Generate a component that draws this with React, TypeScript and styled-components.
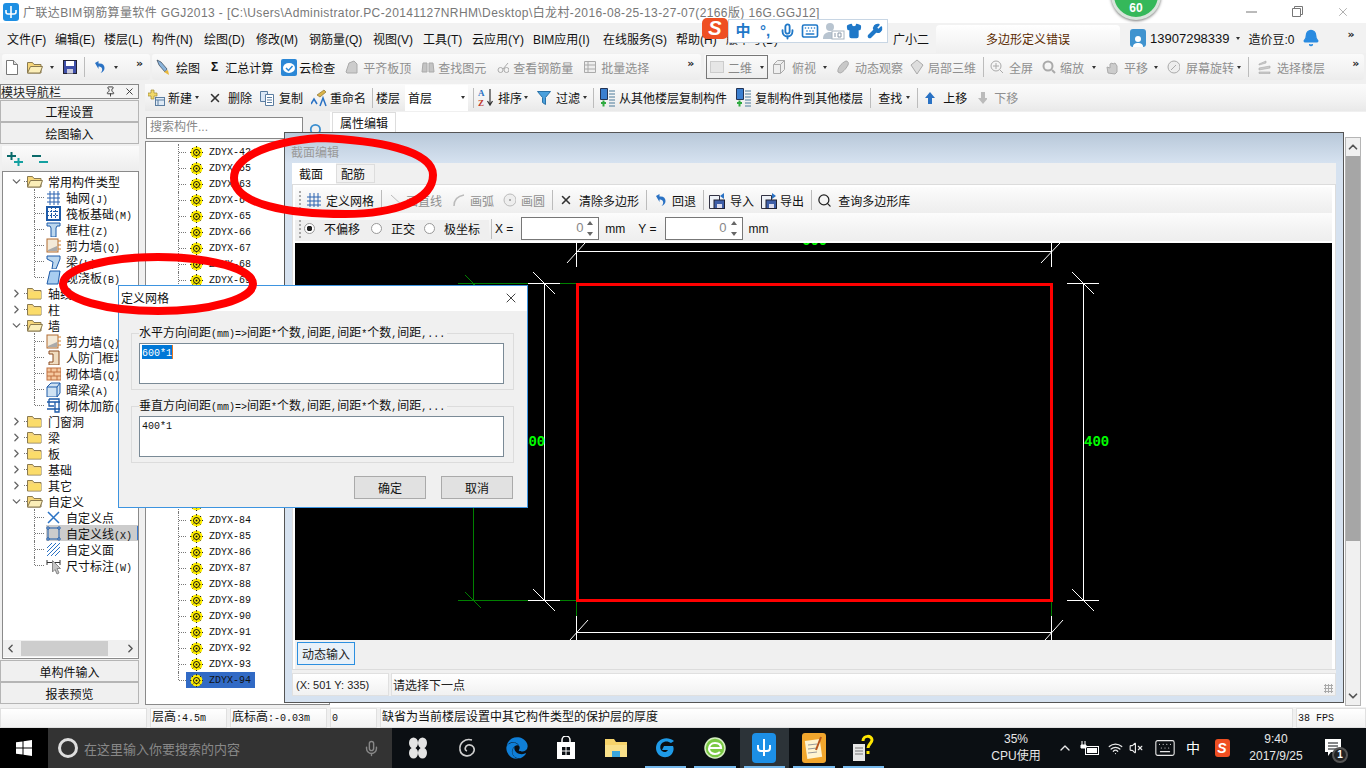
import React from 'react';
import styled, { createGlobalStyle } from 'styled-components';
import { Bell, ChevronDown, ChevronLeft, ChevronRight, ChevronUp, Keyboard, Mic, Pin, Search, Shirt, VolumeX, Wifi, Wrench, X } from 'lucide-react';
import { FaEdge } from 'react-icons/fa';

const GlobalStyle = createGlobalStyle`
  html, body { margin: 0; padding: 0; background: #f0f0f0; }
  * { box-sizing: border-box; }
  body { font: 12px "Liberation Sans", "Noto Sans CJK SC", sans-serif; color: #111; }
`;

const Root = styled.div`
  position: relative;
  width: 1366px;
  height: 768px;
  overflow: hidden;
  display: flex;
  flex-direction: column;
  background: #f0f0f0;
`;

/* ---- title + menu ---- */
const TitleBar = styled.div`
  height: 23px;
  background: #fff;
  display: flex;
  align-items: center;
  padding-left: 3px;
  color: #777;
  font-size: 12px;
  white-space: nowrap;
`;
const TitleText = styled.span`
  margin-left: 4px;
  letter-spacing: 0.4px;
`;
const WinBtns = styled.div`
  margin-left: auto;
  display: flex;
  color: #777;
`;
const WinBtn = styled.div`
  width: 46px;
  height: 20px;
  display: flex;
  align-items: center;
  justify-content: center;
`;
const MenuBar = styled.div`
  height: 30px;
  display: flex;
  align-items: center;
  padding-left: 7px;
  background: #f2f2f2;
  white-space: nowrap;
`;
const MenuItem = styled.span<{ $w: number }>`
  width: ${p => p.$w}px;
  flex: none;
`;
const MsgTab = styled.div`
  width: 184px;
  height: 28px;
  margin: 1px 0 0 0;
  border-radius: 4px 4px 0 0;
  background: linear-gradient(#fff, #efefef);
  color: #5b2b00;
  display: flex;
  align-items: center;
  justify-content: center;
  flex: none;
`;
const UserBox = styled.div`
  display: flex;
  align-items: center;
  padding-left: 10px;
  flex: 1;
  min-width: 0;
`;
const Avatar = styled.div`
  width: 16px;
  height: 18px;
  border-radius: 3px;
  background: #3f93cf;
  display: flex;
  align-items: flex-end;
  justify-content: center;
  margin-right: 4px;
`;

/* ---- shared toolbar parts ---- */
const ToolRow = styled.div`
  height: 31px;
  display: flex;
  align-items: flex-start;
  padding: 1px 0 0 2px;
  background: #f0f0f0;
`;
const ToolGroup = styled.div<{ $w: number; $ml?: number }>`
  width: ${p => p.$w}px;
  margin-left: ${p => p.$ml ?? 0}px;
  height: 26px;
  display: flex;
  align-items: center;
  background: linear-gradient(#fbfbfb, #f3f3f3 60%, #ececec);
  border-radius: 3px;
  flex: none;
  white-space: nowrap;
`;
const Tool = styled.span<{ $ml?: number; $gap?: number; $off?: boolean }>`
  display: inline-flex;
  align-items: center;
  flex: none;
  margin-left: ${p => p.$ml ?? 0}px;
  gap: ${p => p.$gap ?? 5}px;
  color: ${p => (p.$off ? '#8f8f8f' : '#111')};
  svg { flex: none; display: block; }
`;
const Caret = styled.i<{ $ml?: number }>`
  flex: none;
  margin-left: ${p => p.$ml ?? 0}px;
  width: 0;
  height: 0;
  border-left: 2.5px solid transparent;
  border-right: 2.5px solid transparent;
  border-top: 3px solid #333;
`;
const Sep = styled.i<{ $ml?: number }>`
  flex: none;
  margin-left: ${p => p.$ml ?? 0}px;
  width: 1px;
  height: 20px;
  background: #bcbcbc;
`;
const More = styled.b<{ $ml?: number }>`
  flex: none;
  margin-left: ${p => p.$ml ?? 0}px;
  margin-top: -8px;
  font: bold 11px "DejaVu Sans", sans-serif;
  color: #222;
`;
const Combo = styled.div<{ $ml: number; $w: number; $line?: boolean }>`
  flex: none;
  margin-left: ${p => p.$ml}px;
  width: ${p => p.$w}px;
  height: ${p => (p.$line ? 24 : 26)}px;
  display: flex;
  align-items: center;
  padding: 0 3px;
  background: ${p => (p.$line ? 'transparent' : '#fff')};
  border: ${p => (p.$line ? '1px solid #777' : '0')};
`;
const ComboText = styled.span<{ $off?: boolean }>`
  flex: 1;
  color: ${p => (p.$off ? '#888' : '#111')};
`;
const Swatch = styled.i`
  width: 14px;
  height: 12px;
  margin-right: 4px;
  border: 1px solid #ccc;
  background: #e6e6e6;
`;
const BeanText = styled.span`
  margin-left: 9px;
`;
const Num = styled.span`
  font-size: 13px;
`;

/* ---- work area ---- */
const Work = styled.div`
  flex: 1;
  display: flex;
  min-height: 0;
`;
const Nav = styled.div`
  width: 139px;
  flex: none;
  display: flex;
  flex-direction: column;
`;
const NavHead = styled.div`
  height: 15px;
  border: 1px solid #888;
  display: flex;
  align-items: center;
  justify-content: space-between;
  padding: 0 3px 0 0;
  background: #f4f4f4;
  color: #222;
  svg { display: block; }
`;
const NavHeadIcons = styled.span`
  display: flex;
  gap: 8px;
`;
const NavBtn = styled.div<{ $top?: number }>`
  height: 22px;
  margin-top: ${p => p.$top ?? 0}px;
  flex: none;
  display: flex;
  align-items: center;
  justify-content: center;
  border: 1px solid #b5b5b5;
  background: #f0f0f0;
  color: #111;
`;
const TreeTools = styled.div`
  height: 25px;
  margin: 2px 0 0 2px;
  display: flex;
  align-items: center;
  gap: 9px;
  padding-left: 5px;
  background: linear-gradient(#fbfbfb, #ededed);
`;
const TreeBox = styled.div`
  position: relative;
  height: 488px;
  margin-left: 2px;
  border: 1px solid #8a8a8a;
  background: #fff;
  padding-top: 1px;
  display: flex;
  flex-direction: column;
`;
const TreeScroll = styled.div`
  flex: 1;
  overflow: hidden;
`;
const HBar = styled.div`
  height: 17px;
  display: flex;
  align-items: center;
  justify-content: space-between;
  padding: 0 1px;
  background: #f0f0f0;
  color: #555;
  margin-bottom: 1px;
`;
const HThumb = styled.i`
  position: absolute;
  left: 18px;
  bottom: 2px;
  width: 87px;
  height: 15px;
  background: #cdcdcd;
`;
const Row = styled.div<{ $child?: boolean; $last?: boolean }>`
  position: relative;
  height: 16px;
  display: flex;
  align-items: center;
  white-space: nowrap;
  padding-left: ${p => (p.$child ? 43 : 5)}px;
  ${p => p.$child && `
    &::before {
      content: '';
      position: absolute;
      left: 31px;
      top: 0;
      height: ${p.$last ? 8 : 16}px;
      border-left: 1px dotted #777;
    }
    &::after {
      content: '';
      position: absolute;
      left: 32px;
      top: 8px;
      width: 9px;
      border-top: 1px dotted #777;
    }
  `}
`;
const Expander = styled.span`
  width: 16px;
  display: flex;
  justify-content: center;
  color: #666;
  flex: none;
`;
const Stub = styled.i`
  width: 3px;
  border-top: 1px dotted #777;
  flex: none;
`;
const NodeLabel = styled.span<{ $sel?: boolean }>`
  display: flex;
  align-items: center;
  gap: 5px;
  height: 16px;
  width: ${p => (p.$sel ? '93px' : 'auto')};
  background: ${p => (p.$sel ? '#cccccc' : 'transparent')};
  svg { flex: none; display: block; }
`;
const EditStub = styled.i`
  margin-left: auto;
  width: 3px;
  height: 14px;
  background: #fff;
  border: 1px solid #3a7ad0;
  border-right: 0;
`;
const Latin = styled.span`
  font: 10px "Liberation Mono", monospace;
`;
const Right = styled.div`
  flex: 1;
  margin-left: 6px;
  display: flex;
  flex-direction: column;
  min-width: 0;
`;
const Toolbar2 = styled.div`
  height: 27px;
  flex: none;
  display: flex;
  align-items: center;
  white-space: nowrap;
  background: linear-gradient(#fbfbfb, #f2f2f2 60%, #e9e9e9);
`;
const Body = styled.div`
  position: relative;
  flex: 1;
  display: flex;
  padding-top: 1px;
  min-height: 0;
`;
const ListCol = styled.div`
  width: 185px;
  flex: none;
  display: flex;
  flex-direction: column;
`;
const SearchRow = styled.div`
  height: 29px;
  display: flex;
  padding: 5px 0 0 1px;
  gap: 6px;
  color: #3a8ecf;
  svg { margin-top: 6px; }
`;
const SearchInput = styled.div`
  width: 157px;
  height: 22px;
  border: 1px solid #888;
  background: #fff;
  color: #888;
  padding: 0 3px;
  line-height: 18px;
`;
const ListPanel = styled.div`
  flex: 1;
  border: 1px solid #8a8a8a;
  background: #fff;
  margin-bottom: 2px;
  padding-top: 2px;
  overflow: hidden;
`;
const ListRow = styled.div<{ $last?: boolean }>`
  position: relative;
  height: 16px;
  display: flex;
  padding-left: 40px;
  &::before {
    content: '';
    position: absolute;
    left: 32px;
    top: 0;
    height: ${p => (p.$last ? 8 : 16)}px;
    border-left: 1px dotted #777;
  }
  &::after {
    content: '';
    position: absolute;
    left: 33px;
    top: 8px;
    width: 7px;
    border-top: 1px dotted #777;
  }
`;
const ListItem = styled.span<{ $sel?: boolean }>`
  display: flex;
  align-items: center;
  gap: 6px;
  padding: 0 4px;
  background: ${p => (p.$sel ? '#316ac5' : 'transparent')};
  font: 10px "Liberation Mono", monospace;
  color: #111;
`;
const PropCol = styled.div`
  flex: 1;
  display: flex;
  flex-direction: column;
`;
const PropTabs = styled.div`
  height: 20px;
  padding-left: 2px;
  display: flex;
  background: #fff;
`;
const PropTab = styled.div`
  width: 64px;
  display: flex;
  align-items: center;
  justify-content: center;
  background: #fff;
  border: 1px solid #ddd;
  border-bottom: 0;
`;
const PropBlank = styled.div`
  flex: 1;
  background: #fff;
`;
const VBar = styled.div`
  position: absolute;
  left: 1200px;
  top: 26px;
  width: 16px;
  height: 569px;
  border: 1px solid #b5b5b5;
  display: flex;
  flex-direction: column;
  align-items: center;
  color: #555;
  background: #f0f0f0;
  svg { flex: none; margin: 2px 0; }
`;
const VThumb = styled.i`
  width: 100%;
  height: 385px;
  margin: 0 0 auto;
  background: #a6a6a6;
`;

/* ---- editor window ---- */
const EditorWindow = styled.div`
  position: absolute;
  left: 139px;
  top: 21px;
  width: 1060px;
  height: 571px;
  border: 1px solid #555;
  background: #d6e2f0;
  display: flex;
  flex-direction: column;
`;
const EditorTitle = styled.div`
  height: 30px;
  flex: none;
  padding: 10px 0 0 6px;
  color: #999;
  background: linear-gradient(#b8c8d9, #d6e2f0);
`;
const EditorBody = styled.div`
  margin: 0 7px;
  height: 533px;
  background: #f0f0f0;
  display: flex;
  flex-direction: column;
`;
const TabRow = styled.div`
  height: 21px;
  flex: none;
  display: flex;
  align-items: flex-end;
`;
const SecTab = styled.div<{ $on?: boolean }>`
  width: ${p => (p.$on ? 44 : 39)}px;
  height: ${p => (p.$on ? 21 : 19)}px;
  display: flex;
  align-items: center;
  padding-left: ${p => (p.$on ? 7 : 4)}px;
  padding-bottom: 1px;
  background: ${p => (p.$on ? '#fff' : '#f2f2f2')};
  border: ${p => (p.$on ? '0' : '1px solid #ddd')};
  margin-bottom: ${p => (p.$on ? 0 : 1)}px;
`;
const SecPanel = styled.div`
  height: 486px;
  flex: none;
  border: 1px solid #dcdcdc;
  background: #fff;
  padding: 2px 3px 0 2px;
  display: flex;
  flex-direction: column;
`;
const EditBar = styled.div<{ $h: number; $top?: number }>`
  height: ${p => p.$h}px;
  padding-top: ${p => p.$top ?? 0}px;
  flex: none;
  display: flex;
  align-items: center;
  white-space: nowrap;
  background: linear-gradient(#fcfcfc, #f3f3f3 60%, #eeeeee);
`;
const Grip = styled.i`
  flex: none;
  width: 2px;
  height: 18px;
  margin-left: 4px;
  border-left: 2px dotted #aaa;
`;
const ModeGroup = styled.div`
  width: 194px;
  height: 18px;
  display: flex;
  align-items: center;
  background: #efefef;
  flex: none;
`;
const Radio = styled.i<{ $on?: boolean; $ml: number }>`
  flex: none;
  margin-left: ${p => p.$ml}px;
  width: 11px;
  height: 11px;
  border: 1px solid #999;
  border-radius: 50%;
  background: ${p => (p.$on ? 'radial-gradient(circle, #222 0 2.6px, #fff 3px)' : '#fff')};
`;
const ModeLabel = styled.span<{ $ml: number }>`
  margin-left: ${p => p.$ml}px;
`;
const Field = styled.div<{ $ml: number }>`
  position: relative;
  flex: none;
  margin-left: ${p => p.$ml}px;
  width: 78px;
  height: 23px;
  border: 1px solid #777;
  background: #fff;
  text-align: right;
  line-height: 20px;
  padding-right: 15px;
  color: #888;
  font-size: 13px;
`;
const Spin = styled.i<{ $down?: boolean }>`
  position: absolute;
  right: 5px;
  ${p => (p.$down ? 'bottom: 3px;' : 'top: 3px;')}
  border-left: 3px solid transparent;
  border-right: 3px solid transparent;
  ${p => (p.$down ? 'border-top: 4px solid #666;' : 'border-bottom: 4px solid #666;')}
`;
const Canvas = styled.div`
  height: 397px;
  margin-top: 2px;
  flex: none;
  background: #000;
  svg { display: block; }
`;
const CanvasFoot = styled.div`
  flex: 1;
  background: #f0f0f0;
  padding: 2px 0 0 2px;
`;
const DynBtn = styled.div`
  width: 58px;
  height: 23px;
  border: 1px solid #2b8fe0;
  background: #e8f1f9;
  color: #222;
  display: flex;
  align-items: center;
  justify-content: center;
`;
const PromptRow = styled.div`
  height: 23px;
  margin-top: 3px;
  flex: none;
  display: flex;
  gap: 2px;
`;
const PromptCell = styled.div<{ $w?: number }>`
  position: relative;
  ${p => (p.$w ? `width: ${p.$w}px; font-size: 11px;` : 'flex: 1;')}
  border: 1px solid #e0e0e0;
  background: linear-gradient(#fff, #f1f1f1);
  display: flex;
  align-items: center;
  padding-left: ${p => (p.$w ? 3 : 1)}px;
  color: #222;
`;
const ResizeGrip = styled.i`
  position: absolute;
  right: 2px;
  bottom: 2px;
  width: 9px;
  height: 9px;
  background: radial-gradient(circle, #aaa 1px, transparent 1.2px) 0 0 / 3px 3px;
`;

/* ---- status + taskbar ---- */
const StatusBar = styled.div`
  height: 20px;
  margin-top: 1px;
  flex: none;
  display: flex;
  gap: 3px;
`;
const StatusCell = styled.div<{ $w?: number }>`
  ${p => (p.$w ? `width: ${p.$w}px; flex: none;` : 'flex: 1;')}
  border: 1px solid #e0e0e0;
  background: linear-gradient(#fff, #f2f2f2);
  padding-left: 1px;
  line-height: 17px;
  white-space: nowrap;
`;
const Taskbar = styled.div`
  height: 40px;
  flex: none;
  display: flex;
  background: #0b0f13;
  color: #eee;
`;
const StartBtn = styled.div`
  width: 48px;
  background: #000;
  display: flex;
  align-items: center;
  justify-content: center;
`;
const SearchBox = styled.div`
  width: 344px;
  margin-right: 1px;
  background: #333;
  color: #888;
  display: flex;
  align-items: center;
  padding-left: 10px;
  font-size: 13px;
`;
const Cortana = styled.i`
  width: 20px;
  height: 20px;
  margin-right: 6px;
  border: 3px solid #ddd;
  border-radius: 50%;
`;
const SearchMic = styled.span`
  margin-left: auto;
  margin-right: 12px;
  display: flex;
`;
const Slot = styled.div<{ $run?: boolean; $on?: boolean }>`
  position: relative;
  width: 49.5px;
  flex: none;
  display: flex;
  align-items: center;
  justify-content: center;
  background: ${p => (p.$on ? '#2c3338' : 'transparent')};
  ${p => p.$run && `
    &::after {
      content: '';
      position: absolute;
      left: 4px;
      right: 4px;
      bottom: 0;
      height: 2px;
      background: #76b9ed;
    }
  `}
`;
const Tray = styled.div`
  margin-left: auto;
  display: flex;
  padding-right: 8px;
`;
const TrayItem = styled.div<{ $w: number }>`
  position: relative;
  width: ${p => p.$w}px;
  flex: none;
  display: flex;
  flex-direction: column;
  align-items: center;
  justify-content: center;
  line-height: 17px;
  font-size: 12px;
  color: #e8e8e8;
`;
const CnTray = styled.span`
  font-size: 14px;
  color: #fff;
`;
const NoteBadge = styled.b`
  position: absolute;
  left: 24px;
  top: 19px;
  width: 16px;
  height: 16px;
  border-radius: 50%;
  border: 2px solid #555;
  background: #222;
  color: #fff;
  font: bold 10px/12px "Liberation Sans", sans-serif;
  text-align: center;
`;

/* ---- things lying on top ---- */
const ScoreBadge = styled.div`
  position: absolute;
  left: 1111px;
  top: -30px;
  width: 50px;
  height: 50px;
  border-radius: 50%;
  background: #35b85a;
  border: 3px solid #d9e4dc;
  box-shadow: 0 1px 3px #777;
  color: #fff;
  font: bold 12px "Liberation Sans", sans-serif;
  display: flex;
  align-items: flex-end;
  justify-content: center;
  padding-bottom: 2px;
`;
const ImeBar = styled.div`
  position: absolute;
  left: 702px;
  top: 18px;
  display: flex;
  align-items: flex-start;
`;
const ImeLogo = styled.div`
  width: 26px;
  height: 21px;
  border-radius: 5px;
  background: #ef4f22;
  color: #fff;
  font: italic bold 20px/21px "Liberation Sans", sans-serif;
  text-align: center;
`;
const TrayLogo = styled(ImeLogo)`
  width: 15px;
  height: 18px;
  border-radius: 3px;
  font-size: 14px;
  line-height: 18px;
`;
const ImeBody = styled.div`
  width: 160px;
  height: 24px;
  margin-top: 1px;
  background: #fff;
  border: 1px solid #c8d6e4;
  color: #1f78c8;
  display: flex;
  align-items: center;
  padding-left: 4px;
`;
const ImeCell = styled.span<{ $w: number; $bold?: boolean }>`
  width: ${p => p.$w}px;
  flex: none;
  display: flex;
  justify-content: center;
  font-weight: ${p => (p.$bold ? 700 : 400)};
  font-size: 15px;
  line-height: 18px;
`;
const Dialog = styled.div`
  position: absolute;
  left: 118px;
  top: 285px;
  width: 410px;
  height: 223px;
  border: 1px solid #3d94e0;
  background: #f0f0f0;
  display: flex;
  flex-direction: column;
`;
const DialogTitle = styled.div`
  height: 25px;
  flex: none;
  background: #fff;
  display: flex;
  align-items: center;
  justify-content: space-between;
  padding: 0 8px 2px 2px;
  color: #111;
`;
const DialogBody = styled.div`
  flex: 1;
  padding: 22px 13px 0 12px;
  display: flex;
  flex-direction: column;
  gap: 16px;
`;
const FieldSet = styled.div`
  position: relative;
  height: 57px;
  border: 1px solid #dcdcdc;
  padding: 9px 9px 0 7px;
`;
const FieldLegend = styled.span`
  position: absolute;
  left: 7px;
  top: -8px;
  padding-right: 2px;
  height: 14px;
  line-height: 14px;
  background: #f0f0f0;
  white-space: nowrap;
  color: #111;
`;
const TextArea = styled.div`
  height: 41px;
  border: 1px solid #7a8a96;
  background: #fff;
  padding: 1px 2px;
  line-height: 14px;
  color: #111;
`;
const Selected = styled.span`
  display: inline-block;
  background: #0078d7;
  color: #fff;
  border-right: 1px solid #e87722;
`;
const DialogFoot = styled.div`
  display: flex;
  justify-content: flex-end;
  gap: 15px;
  margin-top: -3px;
  padding-right: 1px;
`;
const DialogBtn = styled.div`
  width: 72px;
  height: 23px;
  border: 1px solid #aaa;
  background: #e1e1e1;
  display: flex;
  align-items: center;
  justify-content: center;
`;
const Marks = styled.svg`
  position: absolute;
  left: 0;
  top: 0;
  pointer-events: none;
`;

/* ---- small drawings ---- */
const sim = (s: string) => (
  <span>
    {s.split(/([\x20-\x7e]+)/).map((part, i) => (/^[\x20-\x7e]+$/.test(part) ? <Latin key={i}>{part}</Latin> : part))}
  </span>
);

const Ico = ({ w = 16, h = 16, children }: { w?: number; h?: number; children: React.ReactNode }) => (
  <svg width={w} height={h} viewBox={`0 0 ${w} ${h}`}>{children}</svg>
);
const AppLogo = () => (
  <Ico w={16} h={18}>
    <rect width="16" height="18" rx="3" fill="#1d8fe3" />
    <path d="M8 3v12M3 7v2a2 2 0 0 0 2 2h6a2 2 0 0 0 2-2V7" stroke="#fff" strokeWidth="1.6" fill="none" />
  </Ico>
);
const DocIcon = () => (
  <Ico w={12} h={16}>
    <path d="M.5 1.500h7l4 4v10H.5z" fill="#fff" stroke="#777" />
    <path d="M7.500 1.500v4h4" fill="#ddd" stroke="#777" />
  </Ico>
);
const FolderIcon = ({ open, w = 16 }: { open?: boolean; w?: number }) => (
  <Ico w={w} h={14}>
    <path d="M.5 2.500h5l1.500 2h7v8.500h-13.500z" fill="#f6d67a" stroke="#8a7a50" />
    {open ? (
      <path d="M.5 13l3-6.500h12l-2.500 6.500z" fill="#fbeeb8" stroke="#8a7a50" />
    ) : (
      <path d="M1.500 6h12.500v6.500h-12.500z" fill="#fbdc6a" />
    )}
  </Ico>
);
const SaveIcon = () => (
  <Ico w={14} h={16}>
    <rect x=".5" y="1.500" width="13" height="13" fill="#3f4fa8" stroke="#223" />
    <rect x="3" y="2" width="8" height="5" fill="#fff" />
    <rect x="4" y="10" width="6" height="4.500" fill="#ccd" />
  </Ico>
);
const UndoIcon = ({ w = 12 }: { w?: number }) => (
  <Ico w={w} h={14}>
    <path d="M2 3l3.500-2v2.500c4-.5 6 1.500 6 4.500 0 2.500-1.500 4-4 5 1.500-1.500 2-3 1.500-4.500-.5-1.500-2-2-3.500-2v2.500z" fill="#2a72c4" />
  </Ico>
);
const DrawIcon = () => (
  <Ico w={14} h={18}>
    <path d="M1 2l4 2 6 7-2 3-6-7z" fill="#8ab4dc" stroke="#345" strokeWidth=".7" />
    <path d="M8 14l5 3-1-5z" fill="#e9b83a" />
  </Ico>
);
const CloudCheck = () => (
  <Ico w={16} h={17}>
    <rect width="16" height="17" rx="2" fill="#2b87d6" />
    <ellipse cx="8" cy="9" rx="6" ry="5" fill="#fff" />
    <path d="M5 9l2.500 2.500 4-4.500" stroke="#2b87d6" strokeWidth="1.500" fill="none" />
  </Ico>
);
const GrayShape = ({ w = 14, kind }: { w?: number; kind: string }) => (
  <Ico w={w} h={16}>
    {kind === 'flat' && <path d="M1 13l3-9 5-2 3 3v9H2z" fill="#ccc" stroke="#aaa" />}
    {kind === 'binoc' && <path d="M2 4h4v9H1zM8 4h4l1 9H8z" fill="#c4c4c4" stroke="#aaa" />}
    {kind === 'glasses' && <path d="M1 11a2.500 2.500 0 1 0 5 0 2.500 2.500 0 1 0-5 0zM7 11a2.500 2.500 0 1 0 5 0 2.500 2.500 0 1 0-5 0zM6 10l5-6" fill="none" stroke="#aaa" />}
    {kind === 'batch' && <path d="M1.500 2.500h11v11h-11zM1.500 6h11M1.500 10h11M5 2.500v11" fill="#eee" stroke="#aaa" />}
    {kind === 'box' && <path d="M1.500 5.500l4-4h7v9l-4 4h-7zM1.500 5.500h7v9M8.500 5.500l4-4" fill="#eee" stroke="#aaa" />}
    {kind === 'orbit' && <path d="M2 13c-1-3 3-9 8-11 2 0 3 2 2 4-2 4-6 8-8 8z" fill="#c8c8c8" stroke="#aaa" />}
    {kind === 'local' && <path d="M7 1l6 5-6 9-6-9z" fill="#ddd" stroke="#aaa" />}
    {kind === 'full' && <g fill="none" stroke="#aaa"><circle cx="6" cy="7" r="5" /><path d="M6 4v6M3 7h6M10 11l3 3" /></g>}
    {kind === 'zoom' && <g fill="none" stroke="#aaa"><circle cx="6" cy="7" r="4.500" strokeWidth="2" /><path d="M10 11l3 3" strokeWidth="2" /></g>}
    {kind === 'pan' && <path d="M3 14l-1-6 3 1V5l2-1 1 1 2-1 2 3v6l-2 2z" fill="#ccc" stroke="#aaa" />}
    {kind === 'rotate' && <g fill="#eee" stroke="#aaa"><circle cx="7" cy="8" r="6" /><path d="M4 11l5-5" /></g>}
    {kind === 'floors' && <path d="M2 5l7-3v2l-7 2zM2 9l11-2v2l-11 2zM2 13h11v1.500h-11z" fill="#ccc" stroke="#aaa" strokeWidth=".6" />}
    {kind === 'line' && <path d="M1 3l12 11" stroke="#bbb" />}
    {kind === 'arc' && <path d="M2 14c0-6 4-10 10-11" stroke="#bbb" strokeWidth="1.500" fill="none" />}
    {kind === 'circle' && <g><circle cx="7" cy="8" r="6" fill="#eee" stroke="#bbb" /><circle cx="7" cy="8" r="1" fill="#999" /></g>}
    {kind === 'down' && <path d="M4 2h4v6h3l-5 6-5-6h3z" fill="#bbb" />}
  </Ico>
);
const NewIcon = () => (
  <Ico w={17} h={17}>
    <path d="M3 1h3v3h3v3H6v3H3V7H0V4h3z" fill="#f0d86a" stroke="#a08a30" strokeWidth=".7" />
    <rect x="7.500" y="8.500" width="9" height="8" fill="#dfeaf5" stroke="#5b7da0" />
    <path d="M7.500 11h9M10 11v5" stroke="#5b7da0" />
  </Ico>
);
const CopyIcon = () => (
  <Ico w={14} h={16}>
    <path d="M.5 1.500h7v10h-7z" fill="#dce8f6" stroke="#5b7da0" />
    <path d="M5.500 4.500h8v11h-8z" fill="#fff" stroke="#5b7da0" />
    <path d="M7 7.500h5M7 10h5M7 12.500h5" stroke="#5b7da0" />
  </Ico>
);
const RenameIcon = () => (
  <Ico w={16} h={18}>
    <path d="M6 6l7-5 2 2-6 5z" fill="#d9b44a" stroke="#8a7030" strokeWidth=".7" />
    <path d="M0 15l3-5 3 5M9 17l3-8 3 8" fill="none" stroke="#2a72c4" strokeWidth="1.500" />
  </Ico>
);
const SortIcon = () => (
  <Ico w={16} h={19}>
    <text x="0" y="8" fontSize="9" fontFamily="Liberation Serif" fontWeight="700" fill="#2a72c4">A</text>
    <text x="0" y="18" fontSize="9" fontFamily="Liberation Serif" fontWeight="700" fill="#c0392b">Z</text>
    <path d="M12 1v15M9.500 13l2.500 4 2.500-4" stroke="#333" strokeWidth="1.200" fill="none" />
  </Ico>
);
const FilterIcon = () => (
  <Ico w={14} h={16}>
    <path d="M.5 1.500h13l-5 6v7l-3-2v-5z" fill="#4ba0dc" stroke="#2a72a8" />
  </Ico>
);
const FloorCopy = () => (
  <Ico w={15} h={19}>
    <path d="M.5.5h7v11h-7z" fill="#3a7fd0" stroke="#235" />
    <path d="M9 3h6M9 6h6M9 9h6M9 12h6M9 15h6M9 18h6" stroke="#4a7a9a" />
    <path d="M1 15h5M3.500 12.500v6" stroke="#2eaa3f" strokeWidth="2" />
  </Ico>
);
const UpArrow = () => (
  <Ico w={10} h={14}>
    <path d="M5 1l5 6H7v6H3V7H0z" fill="#2a72c4" />
  </Ico>
);
const GridIcon = () => (
  <Ico w={14} h={16}>
    <path d="M3 1v14M7 1v14M11 1v14M0 5h14M0 9h14M0 13h14" stroke="#2a62b0" />
  </Ico>
);
const XIcon = () => <X size={14} strokeWidth={2.6} color="#333" />;
const DiskIcon = ({ flip }: { flip?: boolean }) => (
  <Ico w={16} h={17}>
    <path d="M.5 3.500h10v13h-10z" fill="#eef2f8" stroke="#334" />
    <rect x="5" y="8" width="10.500" height="8.500" fill="#3f5fa8" stroke="#223" />
    <rect x="8" y="12" width="5" height="4" fill="#dde" />
    <path d={flip ? 'M11 1l4 3-4 3z' : 'M15 1l-4 3 4 3z'} fill="#2a72c4" />
  </Ico>
);
const PlusMinus = ({ minus }: { minus?: boolean }) => (
  <Ico w={16} h={16}>
    <path d="M0 5h9" stroke="#0a6a6a" strokeWidth="2" />
    {!minus && <path d="M4.500 1v8" stroke="#0a6a6a" strokeWidth="2" />}
    <path d="M7 11h9" stroke="#14a0a0" strokeWidth="2" />
    {!minus && <path d="M11.500 7v8" stroke="#14a0a0" strokeWidth="2" />}
  </Ico>
);
const nodeIcons: Record<string, React.ReactNode> = {
  grid: <path d="M1 4h13M1 8h13M1 12h13M4 1v14M8 1v14M12 1v14" stroke="#2a62b0" />,
  raft: <g><rect x="1" y="1" width="13" height="13" fill="#fff" stroke="#1d5aa8" strokeWidth="2" /><path d="M1 5.500h13M1 9.500h13M5.500 1v13M9.500 1v13" stroke="#1d5aa8" strokeDasharray="2 1" /></g>,
  col: <path d="M1 1h13v3h-3l-1 2v9H5V6L4 4H1z" fill="#bcd7ee" stroke="#1d5aa8" />,
  wall: <g><rect x="1" y="1" width="11" height="13" fill="#f4ead8" stroke="#b06a30" /><path d="M2 12l9-4v5H2z" fill="#aaa" /><path d="M12 3h3M12 7h3M12 11h3" stroke="#d08030" /></g>,
  beam: <path d="M1 2h13v3l-4 10H6l1-7-6-3z" fill="#bcd7ee" stroke="#1d5aa8" />,
  slab: <path d="M4 1h10l-2 13H1z" fill="#a8cdf0" stroke="#1d5aa8" />,
  door: <path d="M3 1h10v14H3v-3h4V4H3z" fill="#f0dcc0" stroke="#8a4a20" />,
  brick: <g><rect x="1" y="2" width="14" height="12" fill="#f6c9a0" stroke="#c07040" /><path d="M1 6h14M1 10h14M5 2v4M11 2v4M8 6v4M5 10v4M11 10v4" stroke="#c07040" /></g>,
  dark: <path d="M1 5l4-4h9v10l-3 4H1zM1 5h10v10M11 5l3-4" fill="#cfe2f3" stroke="#1d5aa8" />,
  rebar: <path d="M1 4h13M1 11h13M3 1h10v13H9V4M3 1v7h5" fill="none" stroke="#1d5aa8" strokeWidth="1.300" />,
  point: <path d="M2 2l11 11M13 2L2 13" stroke="#2a72c4" strokeWidth="1.500" />,
  poly: <g><rect x="2" y="2" width="11" height="11" fill="none" stroke="#1d5aa8" /><path d="M1 1h2v2H1zM12 1h2v2h-2zM1 12h2v2H1zM12 12h2v2h-2z" fill="#fff" stroke="#1d5aa8" /></g>,
  face: <g stroke="#2a72c4"><path d="M1 6l5-5M1 10l9-9M1 14L14 1M5 14l9-9M9 14l5-5" /></g>,
  dim: <path d="M1 2v5M14 2v5M1 4.500h13" stroke="#333" />,
};
const GearIcon = () => (
  <Ico w={13} h={13}>
    <circle cx="6.500" cy="6.500" r="6" fill="#ffee00" />
    <path d="M6.500 0v13M0 6.500h13M2 2l9 9M11 2l-9 9" stroke="#222" strokeWidth="1" strokeDasharray="1.500 1.500" />
    <circle cx="6.500" cy="6.500" r="3" fill="#ffee00" stroke="#111" />
    <circle cx="6.500" cy="6.500" r="1" fill="#111" />
  </Ico>
);
const WinLogo = () => (
  <Ico w={16} h={16}>
    <path d="M0 2.300l6.500-.9V7.500H0zM7.500 1.200L16 0v7.500H7.500zM0 8.500h6.500v6.100L0 13.700zM7.500 8.500H16V16l-8.500-1.200z" fill="#fff" />
  </Ico>
);
const FanIcon = () => (
  <Ico w={22} h={22}>
    <g fill="#e4e4e4">
      <ellipse cx="6.500" cy="6" rx="4.500" ry="5.500" />
      <ellipse cx="15.500" cy="6" rx="4.500" ry="5.500" />
      <ellipse cx="6.500" cy="16" rx="4.500" ry="5.500" />
      <ellipse cx="15.500" cy="16" rx="4.500" ry="5.500" />
    </g>
    <circle cx="11" cy="11" r="1.500" fill="#0b0f13" />
  </Ico>
);
const SwirlIcon = () => (
  <Ico w={20} h={22}>
    <path d="M15 3C8 1 2 6 3 13c1 6 9 8 13 3 3-4 0-9-5-8-3 1-4 5-1 6" fill="none" stroke="#cfcfcf" strokeWidth="1.600" />
  </Ico>
);
const StoreIcon = () => (
  <Ico w={20} h={24}>
    <path d="M6 7V4a4 4 0 0 1 8 0v3" fill="none" stroke="#fff" strokeWidth="1.500" />
    <rect x="1" y="6" width="18" height="17" fill="#fff" />
    <path d="M6 11h3.500v3.500H6zM10.500 11H14v3.500h-3.500zM6 15.500h3.500V19H6zM10.500 15.500H14V19h-3.500z" fill="#0b0f13" />
  </Ico>
);
const ExplorerIcon = () => (
  <Ico w={22} h={20}>
    <path d="M0 1h9l2 3h11v15H0z" fill="#f6d36b" />
    <rect x="0" y="7" width="22" height="12" fill="#f9e08a" />
    <rect x="7" y="13" width="8" height="6" fill="#3aa6dd" />
  </Ico>
);
const GIcon = () => (
  <Ico w={24} h={24}>
    <path d="M21 5C14-1 3 3 3 12c0 8 9 12 15 7 3-3 3-7 2-9h-9l-2 4h6c-1 2-4 3-6 1-3-2-2-8 2-9 3-1 5 0 7 1z" fill="#1f9be8" />
  </Ico>
);
const GreenIe = () => (
  <Ico w={22} h={24}>
    <circle cx="11" cy="12" r="10" fill="#7ac943" stroke="#d5efc0" strokeWidth="1.500" />
    <path d="M5 12h12c0-3-2-5-6-5s-6 3-6 6 3 5 6 5c2 0 4-1 5-2" fill="none" stroke="#fff" strokeWidth="2.200" />
  </Ico>
);
const ActiveApp = () => (
  <Ico w={24} h={30}>
    <rect width="24" height="30" rx="4" fill="#1c8fe6" />
    <path d="M12 6v17M6 12v3a3 3 0 0 0 3 3h6a3 3 0 0 0 3-3v-3" fill="none" stroke="#fff" strokeWidth="2" />
  </Ico>
);
const NoteApp = () => (
  <Ico w={24} h={30}>
    <rect width="24" height="30" rx="3" fill="#f1a62d" />
    <rect x="4" y="7" width="15" height="18" fill="#fff3d0" transform="rotate(-8 11 16)" />
    <path d="M6 12l9-1M6 16l9-1M6 20l9-1" stroke="#999" />
    <path d="M19 4l-5 13" stroke="#b8551c" strokeWidth="2" />
  </Ico>
);
const HelpApp = () => (
  <Ico w={22} h={30}>
    <rect x="1" y="11" width="12" height="17" fill="#e6e6e6" />
    <path d="M3 15h8M3 18h8M3 21h8" stroke="#777" />
    <path d="M11 8c0-6 9-6 9-1 0 3-4 4-4 8M16 18v3" fill="none" stroke="#ffe600" strokeWidth="3" />
  </Ico>
);
const BatteryIcon = () => (
  <Ico w={20} h={16}>
    <path d="M2 1v4M5 1v4M1 5h5v3H1z" stroke="#fff" fill="#fff" />
    <rect x="5.500" y="6.500" width="13" height="8" fill="none" stroke="#fff" />
    <rect x="7" y="8" width="10" height="5" fill="#fff" />
  </Ico>
);
const NoteIcon = () => (
  <Ico w={16} h={18}>
    <path d="M0 0h16v13H6l-3 4v-4H0z" fill="#fff" />
    <path d="M3 4h10M3 7h10M3 10h10" stroke="#0b0f13" />
  </Ico>
);
const ImeUser = () => (
  <Ico w={22} h={18}>
    <circle cx="7" cy="5" r="4" fill="#b8c4d0" />
    <path d="M0 17c0-5 3-7 7-7s7 2 7 7z" fill="#b8c4d0" />
    <rect x="9" y="9" width="12" height="8" fill="#fff" stroke="#a8b4c0" />
    <path d="M12 11v4M15 11h3v4h-3z" stroke="#8a98a8" fill="none" />
  </Ico>
);

/* ---- data ---- */
const menus: [string, number][] = [
  ['文件(F)', 48], ['编辑(E)', 49], ['楼层(L)', 48], ['构件(N)', 52], ['绘图(D)', 52], ['修改(M)', 53],
  ['钢筋量(Q)', 64], ['视图(V)', 50], ['工具(T)', 49], ['云应用(Y)', 61], ['BIM应用(I)', 70], ['在线服务(S)', 73],
  ['帮助(H)', 50], ['版本号(B)', 167], ['广小二', 43],
];

type Node = { label: string; icon?: string; open?: boolean; folder?: boolean; sel?: boolean; last?: boolean };
const tree: Node[] = [
  { label: '常用构件类型', folder: true, open: true },
  { label: '轴网(J)', icon: 'grid' },
  { label: '筏板基础(M)', icon: 'raft' },
  { label: '框柱(Z)', icon: 'col' },
  { label: '剪力墙(Q)', icon: 'wall' },
  { label: '梁(L)', icon: 'beam' },
  { label: '现浇板(B)', icon: 'slab', last: true },
  { label: '轴线', folder: true },
  { label: '柱', folder: true },
  { label: '墙', folder: true, open: true },
  { label: '剪力墙(Q)', icon: 'wall' },
  { label: '人防门框墙(R)', icon: 'door' },
  { label: '砌体墙(Q)', icon: 'brick' },
  { label: '暗梁(A)', icon: 'dark' },
  { label: '砌体加筋(Y)', icon: 'rebar', last: true },
  { label: '门窗洞', folder: true },
  { label: '梁', folder: true },
  { label: '板', folder: true },
  { label: '基础', folder: true },
  { label: '其它', folder: true },
  { label: '自定义', folder: true, open: true },
  { label: '自定义点', icon: 'point' },
  { label: '自定义线(X)', icon: 'poly', sel: true },
  { label: '自定义面', icon: 'face' },
  { label: '尺寸标注(W)', icon: 'dim', last: true },
];

const zdyx = [42, 55, 63, 64];
for (let n = 65; n <= 94; n++) zdyx.push(n);

const Section = () => (
  <svg width="1037" height="397" viewBox="295 243 1037 397" shapeRendering="crispEdges">
    <g stroke="#008000" fill="none">
      <path d="M458 283.500H576M458 600.500H576M473.500 283V600M576.500 601V616M1051.500 601V616" />
      <path d="M465 275L481 291M465 592L481 608" shapeRendering="auto" />
    </g>
    <g stroke="#fff" fill="none">
      <path d="M576 251.500H1051M576.500 243V267M1051.500 243V267" />
      <path d="M576 632.500H1051M576.500 616V640M1051.500 616V640" />
      <path d="M544.500 283V600M528 283.500H560M528 600.500H560" />
      <path d="M1083.500 283V600M1067 283.500H1099M1067 600.500H1099" />
      <g shapeRendering="auto">
        <path d="M567 263L585 243M1041 263L1060 243M570 640L588 620M1045 640L1063 620" />
        <path d="M533 272L555 294M533 589L555 611M1072 272L1094 294M1072 589L1094 611" />
      </g>
    </g>
    <rect x="577.500" y="284" width="474" height="316" fill="none" stroke="#ff0000" strokeWidth="3" />
    <g fill="#00ff00" fontFamily="Liberation Mono" fontSize="14" fontWeight="700">
      <text x="1084" y="446">400</text>
      <text x="520" y="446">400</text>
      <text x="802" y="245">600</text>
    </g>
  </svg>
);

export default function App() {
  return (
    <Root>
      <GlobalStyle />
      <TitleBar>
        <AppLogo />
        <TitleText>{'广联达BIM钢筋算量软件 GGJ2013 - [C:\\Users\\Administrator.PC-20141127NRHM\\Desktop\\白龙村-2016-08-25-13-27-07(2166版) 16G.GGJ12]'}</TitleText>
        <WinBtns>
          <WinBtn><Ico w={11} h={11}><path d="M0 6h11" stroke="#777" /></Ico></WinBtn>
          <WinBtn><Ico w={11} h={11}><path d="M2.500 2.500V.5h8v8h-2M.5 2.500h8v8h-8z" fill="none" stroke="#777" /></Ico></WinBtn>
          <WinBtn><X size={14} strokeWidth={1} /></WinBtn>
        </WinBtns>
      </TitleBar>

      <MenuBar>
        {menus.map(([label, w]) => <MenuItem key={label} $w={w}>{label}</MenuItem>)}
        <MsgTab>多边形定义错误</MsgTab>
        <UserBox>
          <Avatar><Ico w={10} h={12}><circle cx="5" cy="4" r="3" fill="#fff" /><path d="M0 12c0-3 2-4 5-4s5 1 5 4z" fill="#fff" /></Ico></Avatar>
          <Num>13907298339</Num>
          <Caret $ml={6} />
          <BeanText>造价豆:0</BeanText>
          <Tool $ml={7}><Bell size={18} fill="#2a8be0" color="#2a8be0" /></Tool>
          <More $ml={28}>»</More>
        </UserBox>
      </MenuBar>

      <ToolRow>
        <ToolGroup $w={148}>
          <Tool $ml={4}><DocIcon /></Tool>
          <Tool $ml={9}><FolderIcon open w={18} /></Tool>
          <Caret $ml={5} />
          <Tool $ml={9}><SaveIcon /></Tool>
          <Sep $ml={7} />
          <Tool $ml={8}><UndoIcon /></Tool>
          <Caret $ml={9} />
          <More $ml={18}>»</More>
        </ToolGroup>
        <ToolGroup $w={549} $ml={2}>
          <Tool $ml={4} $gap={6}><DrawIcon />绘图</Tool>
          <Tool $ml={11} $gap={7}><b>Σ</b>汇总计算</Tool>
          <Tool $ml={8} $gap={2}><CloudCheck />云检查</Tool>
          <Tool $ml={10} $gap={4} $off><GrayShape kind="flat" />平齐板顶</Tool>
          <Tool $ml={10} $gap={3} $off><GrayShape kind="binoc" />查找图元</Tool>
          <Tool $ml={11} $gap={4} $off><GrayShape w={12} kind="glasses" />查看钢筋量</Tool>
          <Tool $ml={10} $gap={4} $off><GrayShape kind="batch" />批量选择</Tool>
          <More $ml={38}>»</More>
        </ToolGroup>
        <ToolGroup $w={660} $ml={3}>
          <Combo $ml={2} $w={62} $line>
            <Swatch /><ComboText $off>二维</ComboText><Caret />
          </Combo>
          <Tool $ml={4} $gap={6} $off><GrayShape kind="box" />俯视</Tool>
          <Caret $ml={7} />
          <Tool $ml={9} $off><GrayShape kind="orbit" />动态观察</Tool>
          <Tool $ml={7} $gap={3} $off><GrayShape w={15} kind="local" />局部三维</Tool>
          <Sep $ml={7} />
          <Tool $ml={6} $gap={6} $off><GrayShape w={13} kind="full" />全屏</Tool>
          <Tool $ml={9} $gap={4} $off><GrayShape kind="zoom" />缩放</Tool>
          <Caret $ml={8} />
          <Tool $ml={9} $off><GrayShape kind="pan" />平移</Tool>
          <Caret $ml={6} />
          <Tool $ml={9} $gap={6} $off><GrayShape w={13} kind="rotate" />屏幕旋转</Tool>
          <Caret $ml={3} />
          <Sep $ml={7} />
          <Tool $ml={8} $gap={4} $off><GrayShape w={16} kind="floors" />选择楼层</Tool>
          <More $ml={27}>»</More>
        </ToolGroup>
      </ToolRow>

      <Work>
        <Nav>
          <NavHead>
            模块导航栏
            <NavHeadIcons>
              <Pin size={11} color="#333" />
              <X size={11} color="#333" />
            </NavHeadIcons>
          </NavHead>
          <NavBtn $top={1}>工程设置</NavBtn>
          <NavBtn>绘图输入</NavBtn>
          <TreeTools><PlusMinus /><PlusMinus minus /></TreeTools>
          <TreeBox>
            <TreeScroll>
              {tree.map((n, i) =>
                n.folder ? (
                  <Row key={i}>
                    <Expander>
                      {n.open ? <ChevronDown size={13} strokeWidth={2.4} /> : <ChevronRight size={13} strokeWidth={2.4} />}
                    </Expander>
                    <Stub />
                    <NodeLabel><FolderIcon open={n.open} />{sim(n.label)}</NodeLabel>
                  </Row>
                ) : (
                  <Row key={i} $child $last={n.last}>
                    <NodeLabel $sel={n.sel}>
                      <Ico w={15} h={15}>{nodeIcons[n.icon!]}</Ico>
                      {sim(n.label)}
                      {n.sel && <EditStub />}
                    </NodeLabel>
                  </Row>
                )
              )}
            </TreeScroll>
            <HBar><ChevronLeft size={13} strokeWidth={2.6} /><ChevronRight size={13} strokeWidth={2.6} /></HBar>
            <HThumb />
          </TreeBox>
          <NavBtn $top={1}>单构件输入</NavBtn>
          <NavBtn>报表预览</NavBtn>
        </Nav>

        <Right>
          <Toolbar2>
            <Tool $ml={3} $gap={3}><NewIcon />新建</Tool>
            <Caret $ml={3} />
            <Tool $ml={9} $gap={6}><XIcon />删除</Tool>
            <Tool $ml={8}><CopyIcon />复制</Tool>
            <Tool $ml={8} $gap={3}><RenameIcon />重命名</Tool>
            <Sep $ml={6} />
            <Tool $ml={3}>楼层</Tool>
            <Combo $ml={5} $w={63}><ComboText>首层</ComboText><Caret /></Combo>
            <Sep $ml={5} />
            <Tool $ml={4} $gap={4}><SortIcon />排序</Tool>
            <Caret $ml={2} />
            <Tool $ml={9}><FilterIcon />过滤</Tool>
            <Caret $ml={3} />
            <Sep $ml={6} />
            <Tool $ml={6} $gap={4}><FloorCopy />从其他楼层复制构件</Tool>
            <Tool $ml={9} $gap={4}><FloorCopy />复制构件到其他楼层</Tool>
            <Sep $ml={7} />
            <Tool $ml={7}>查找</Tool>
            <Caret $ml={4} />
            <Sep $ml={7} />
            <Tool $ml={7} $gap={8}><UpArrow />上移</Tool>
            <Tool $ml={10} $gap={7} $off><GrayShape w={10} kind="down" />下移</Tool>
          </Toolbar2>
          <Body>
            <ListCol>
              <SearchRow>
                <SearchInput>搜索构件...</SearchInput>
                <Search size={14} strokeWidth={3} />
              </SearchRow>
              <ListPanel>
                {zdyx.map((n, i) => (
                  <ListRow key={n} $last={i === zdyx.length - 1}>
                    <ListItem $sel={n === 94}><GearIcon />ZDYX-{n}</ListItem>
                  </ListRow>
                ))}
              </ListPanel>
            </ListCol>
            <PropCol>
              <PropTabs><PropTab>属性编辑</PropTab></PropTabs>
              <PropBlank />
            </PropCol>
            <VBar>
              <ChevronUp size={14} strokeWidth={3} />
              <VThumb />
              <ChevronDown size={14} strokeWidth={3} />
            </VBar>

            <EditorWindow>
              <EditorTitle>截面编辑</EditorTitle>
              <EditorBody>
                <TabRow>
                  <SecTab $on>截面</SecTab>
                  <SecTab>配筋</SecTab>
                </TabRow>
                <SecPanel>
                  <EditBar $h={26}>
                    <Grip />
                    <Tool $ml={6}><GridIcon />定义网格</Tool>
                    <Sep $ml={7} />
                    <Tool $ml={8} $gap={3} $off><GrayShape w={13} kind="line" />画直线</Tool>
                    <Tool $ml={10} $off><GrayShape w={13} kind="arc" />画弧</Tool>
                    <Tool $ml={9} $off><GrayShape w={13} kind="circle" />画圆</Tool>
                    <Sep $ml={7} />
                    <Tool $ml={6} $gap={6}><XIcon />清除多边形</Tool>
                    <Sep $ml={7} />
                    <Tool $ml={7} $gap={6}><UndoIcon />回退</Tool>
                    <Sep $ml={7} />
                    <Tool $ml={5}><DiskIcon />导入</Tool>
                    <Tool $ml={7} $gap={3}><DiskIcon flip />导出</Tool>
                    <Sep $ml={7} />
                    <Tool $ml={5} $gap={6}><Search size={15} color="#222" />查询多边形库</Tool>
                  </EditBar>
                  <EditBar $h={28} $top={3}>
                    <ModeGroup>
                      <Grip />
                      <Radio $on $ml={3} />
                      <ModeLabel $ml={9}>不偏移</ModeLabel>
                      <Radio $ml={11} />
                      <ModeLabel $ml={9}>正交</ModeLabel>
                      <Radio $ml={9} />
                      <ModeLabel $ml={9}>极坐标</ModeLabel>
                    </ModeGroup>
                    <Sep $ml={2} />
                    <ModeLabel $ml={3}>X =</ModeLabel>
                    <Field $ml={8}>0<Spin /><Spin $down /></Field>
                    <ModeLabel $ml={6}>mm</ModeLabel>
                    <ModeLabel $ml={13}>Y =</ModeLabel>
                    <Field $ml={8}>0<Spin /><Spin $down /></Field>
                    <ModeLabel $ml={6}>mm</ModeLabel>
                  </EditBar>
                  <Canvas><Section /></Canvas>
                  <CanvasFoot><DynBtn>动态输入</DynBtn></CanvasFoot>
                </SecPanel>
                <PromptRow>
                  <PromptCell $w={97}>(X: 501 Y: 335)</PromptCell>
                  <PromptCell>请选择下一点<ResizeGrip /></PromptCell>
                </PromptRow>
              </EditorBody>
            </EditorWindow>
          </Body>
        </Right>
      </Work>

      <StatusBar>
        <StatusCell $w={147} />
        <StatusCell $w={77}>{sim('层高:4.5m')}</StatusCell>
        <StatusCell $w={97}>{sim('底标高:-0.03m')}</StatusCell>
        <StatusCell $w={47}>{sim('0')}</StatusCell>
        <StatusCell>缺省为当前楼层设置中其它构件类型的保护层的厚度</StatusCell>
        <StatusCell $w={70}>{sim('38 FPS')}</StatusCell>
      </StatusBar>

      <Taskbar>
        <StartBtn><WinLogo /></StartBtn>
        <SearchBox>
          <Cortana />
          在这里输入你要搜索的内容
          <SearchMic><Mic size={17} color="#888" /></SearchMic>
        </SearchBox>
        <Slot><FanIcon /></Slot>
        <Slot><SwirlIcon /></Slot>
        <Slot><FaEdge size={22} color="#0f7fd8" /></Slot>
        <Slot><StoreIcon /></Slot>
        <Slot><ExplorerIcon /></Slot>
        <Slot $run><GIcon /></Slot>
        <Slot $run><GreenIe /></Slot>
        <Slot $run $on><ActiveApp /></Slot>
        <Slot $run><NoteApp /></Slot>
        <Slot $run><HelpApp /></Slot>
        <Tray>
          <TrayItem $w={60}><span>35%</span><span>CPU使用</span></TrayItem>
          <TrayItem $w={7} />
          <TrayItem $w={24}><ChevronUp size={16} /></TrayItem>
          <TrayItem $w={26}><BatteryIcon /></TrayItem>
          <TrayItem $w={24}><Wifi size={15} /></TrayItem>
          <TrayItem $w={17}><VolumeX size={14} /></TrayItem>
          <TrayItem $w={42}><Keyboard size={22} strokeWidth={1.2} /></TrayItem>
          <TrayItem $w={14}><CnTray>中</CnTray></TrayItem>
          <TrayItem $w={44}><TrayLogo>S</TrayLogo></TrayItem>
          <TrayItem $w={64}><span>9:40</span><span>2017/9/25</span></TrayItem>
          <TrayItem $w={50}><NoteIcon /><NoteBadge>1</NoteBadge></TrayItem>
        </Tray>
      </Taskbar>

      <ScoreBadge>60</ScoreBadge>
      <ImeBar>
        <ImeLogo>S</ImeLogo>
        <ImeBody>
          <ImeCell $w={20} $bold>中</ImeCell>
          <ImeCell $w={24} $bold>°,</ImeCell>
          <ImeCell $w={20}><Mic size={17} strokeWidth={2.6} /></ImeCell>
          <ImeCell $w={26}><Keyboard size={18} strokeWidth={2.2} /></ImeCell>
          <ImeCell $w={22}><ImeUser /></ImeCell>
          <ImeCell $w={17}><Shirt size={16} fill="#1f78c8" /></ImeCell>
          <ImeCell $w={26}><Wrench size={16} fill="#1f78c8" /></ImeCell>
        </ImeBody>
      </ImeBar>

      <Dialog>
        <DialogTitle>定义网格<X size={16} strokeWidth={1.2} /></DialogTitle>
        <DialogBody>
          <FieldSet>
            <FieldLegend>{sim('水平方向间距(mm)=>间距*个数,间距,间距*个数,间距,...')}</FieldLegend>
            <TextArea><Selected>{sim('600*1')}</Selected></TextArea>
          </FieldSet>
          <FieldSet>
            <FieldLegend>{sim('垂直方向间距(mm)=>间距*个数,间距,间距*个数,间距,...')}</FieldLegend>
            <TextArea>{sim('400*1')}</TextArea>
          </FieldSet>
          <DialogFoot>
            <DialogBtn>确定</DialogBtn>
            <DialogBtn>取消</DialogBtn>
          </DialogFoot>
        </DialogBody>
      </Dialog>

      <Marks width="1366" height="768" viewBox="0 0 1366 768">
        <path d="M234 178C234 160 262 142 320 138C375 140 433 150 433 175C433 200 395 214 345 214C290 214 234 205 234 178Z" fill="none" stroke="#ff0000" strokeWidth="8" />
        <ellipse cx="158" cy="284" rx="95" ry="27" fill="none" stroke="#ff0000" strokeWidth="8" />
        <path d="M52.500 560.500V572L55 569.500L57 574L59 573L57 568.500H60.500Z" fill="#c4c4c4" stroke="#888" />
      </Marks>
    </Root>
  );
}
